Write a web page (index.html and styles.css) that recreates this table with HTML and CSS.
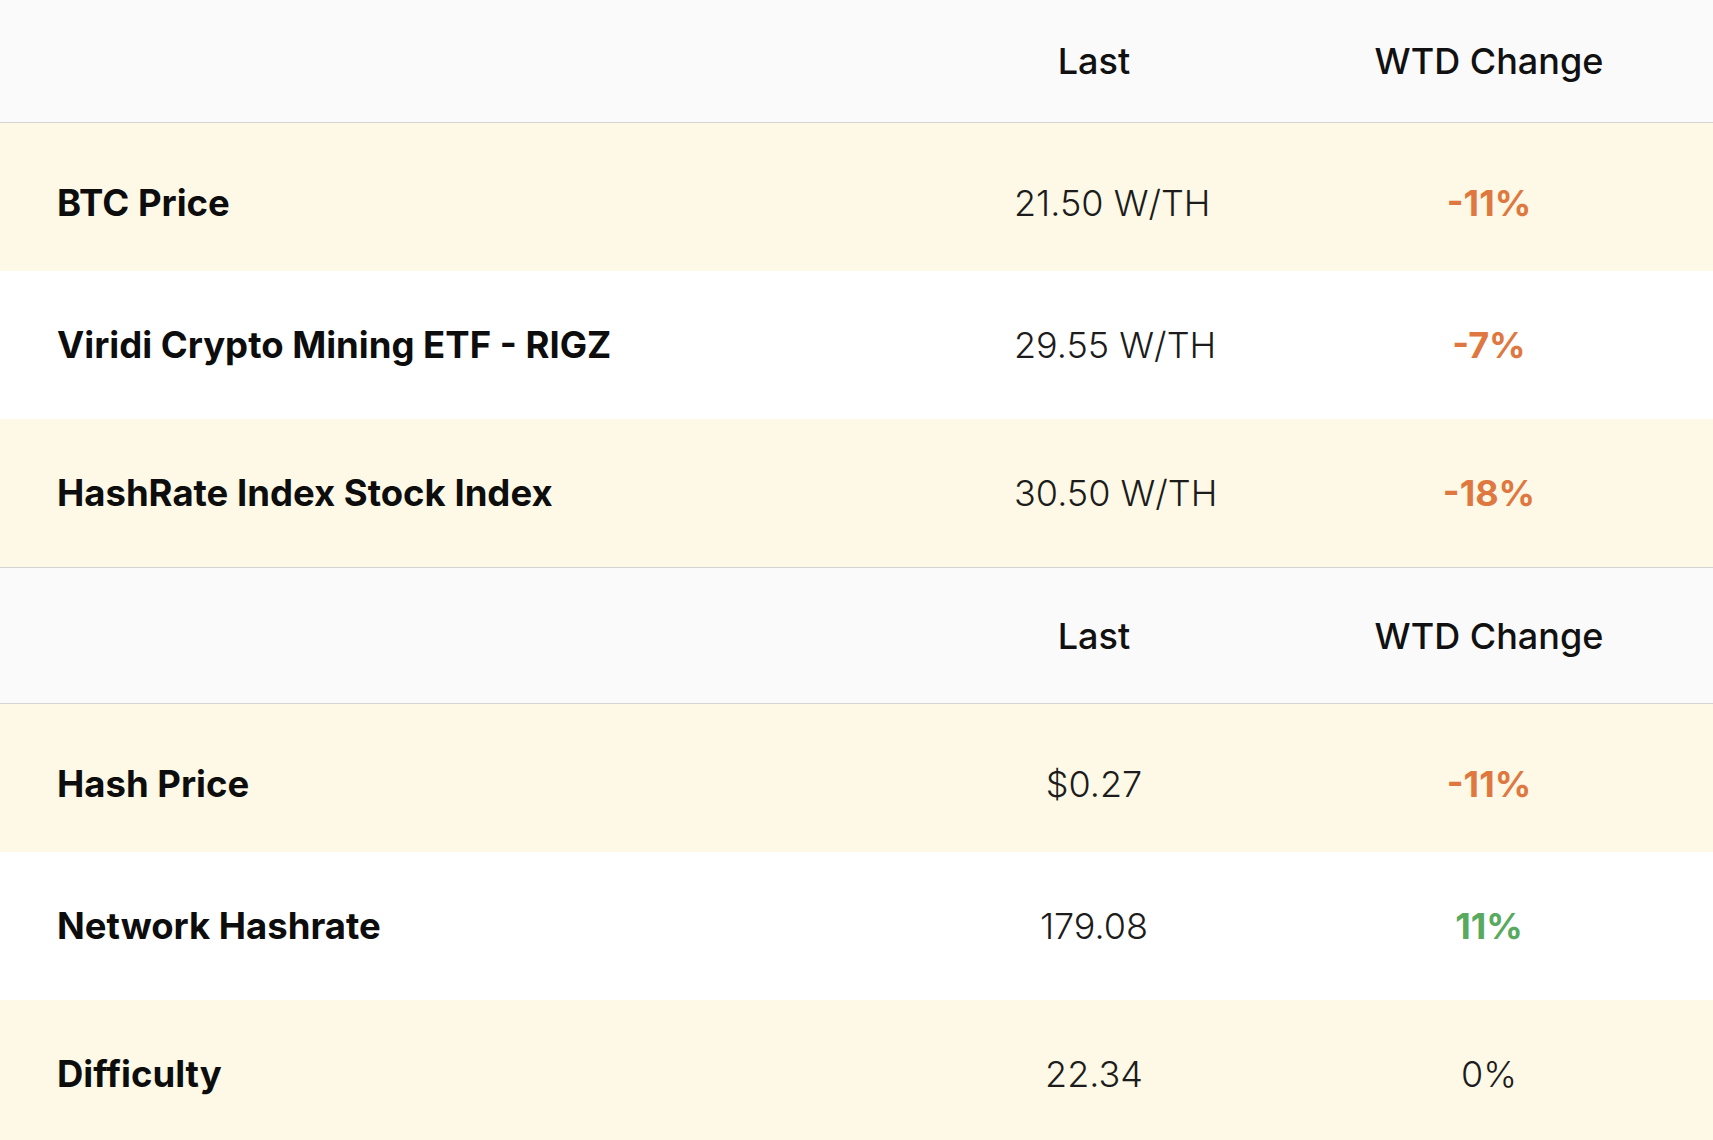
FILE: index.html
```html
<!DOCTYPE html>
<html lang="en">
<head>
<meta charset="utf-8">
<title>Mining Metrics</title>
<link rel="stylesheet" href="styles.css">
</head>
<body>
<div class="table">
  <div class="row head head-first">
    <div class="cell label"></div>
    <div class="cell last">Last</div>
    <div class="cell change">WTD Change</div>
  </div>
  <div class="row cream first">
    <div class="cell label">BTC Price</div>
    <div class="cell last">21.50 W/TH</div>
    <div class="cell change neg">-11%</div>
  </div>
  <div class="row">
    <div class="cell label">Viridi Crypto Mining ETF - RIGZ</div>
    <div class="cell last">29.55 W/TH</div>
    <div class="cell change neg">-7%</div>
  </div>
  <div class="row cream">
    <div class="cell label">HashRate Index Stock Index</div>
    <div class="cell last">30.50 W/TH</div>
    <div class="cell change neg">-18%</div>
  </div>
  <div class="row head">
    <div class="cell label"></div>
    <div class="cell last">Last</div>
    <div class="cell change">WTD Change</div>
  </div>
  <div class="row cream first">
    <div class="cell label">Hash Price</div>
    <div class="cell last">$0.27</div>
    <div class="cell change neg">-11%</div>
  </div>
  <div class="row">
    <div class="cell label">Network Hashrate</div>
    <div class="cell last">179.08</div>
    <div class="cell change pos">11%</div>
  </div>
  <div class="row cream">
    <div class="cell label">Difficulty</div>
    <div class="cell last">22.34</div>
    <div class="cell change">0%</div>
  </div>
</div>
</body>
</html>
```

FILE: styles.css
```css
* { box-sizing: border-box; }
html, body { margin: 0; padding: 0; background: #ffffff; }
body {
  font-family: Inter, "Noto Sans", "Liberation Sans", sans-serif;
  color: #111111;
  overflow: hidden;
}
.table { display: flex; flex-direction: column; }
.row {
  display: grid;
  grid-template-columns: 1fr 160px 380px;
  column-gap: 125px;
  align-items: center;
  padding: 0 34px 0 57px;
  height: 148px;
  background: #ffffff;
  font-size: 36px;
}
.row.cream { background: #fdf9e6; }
.row.first { padding-top: 12px; }
.row.head {
  background: #fafafa;
  height: 137px;
  border-top: 1px solid #d4d4d4;
  border-bottom: 1px solid #d4d4d4;
  font-weight: 500;
  color: #111111;
}
.row.head.head-first { height: 123px; border-top: none; }
.cell { white-space: nowrap; }
.label { font-weight: 700; color: #0d0d0d; font-size: 36.5px; }
.last, .change { text-align: center; }
.row:not(.head) .last { font-weight: 300; color: #1c1c1c; }
.row:not(.head) .change { font-weight: 300; color: #1c1c1c; }
.row:not(.head) .change.neg { color: #df7840; font-weight: 700; }
.row:not(.head) .change.pos { color: #58aa5e; font-weight: 700; }
```
